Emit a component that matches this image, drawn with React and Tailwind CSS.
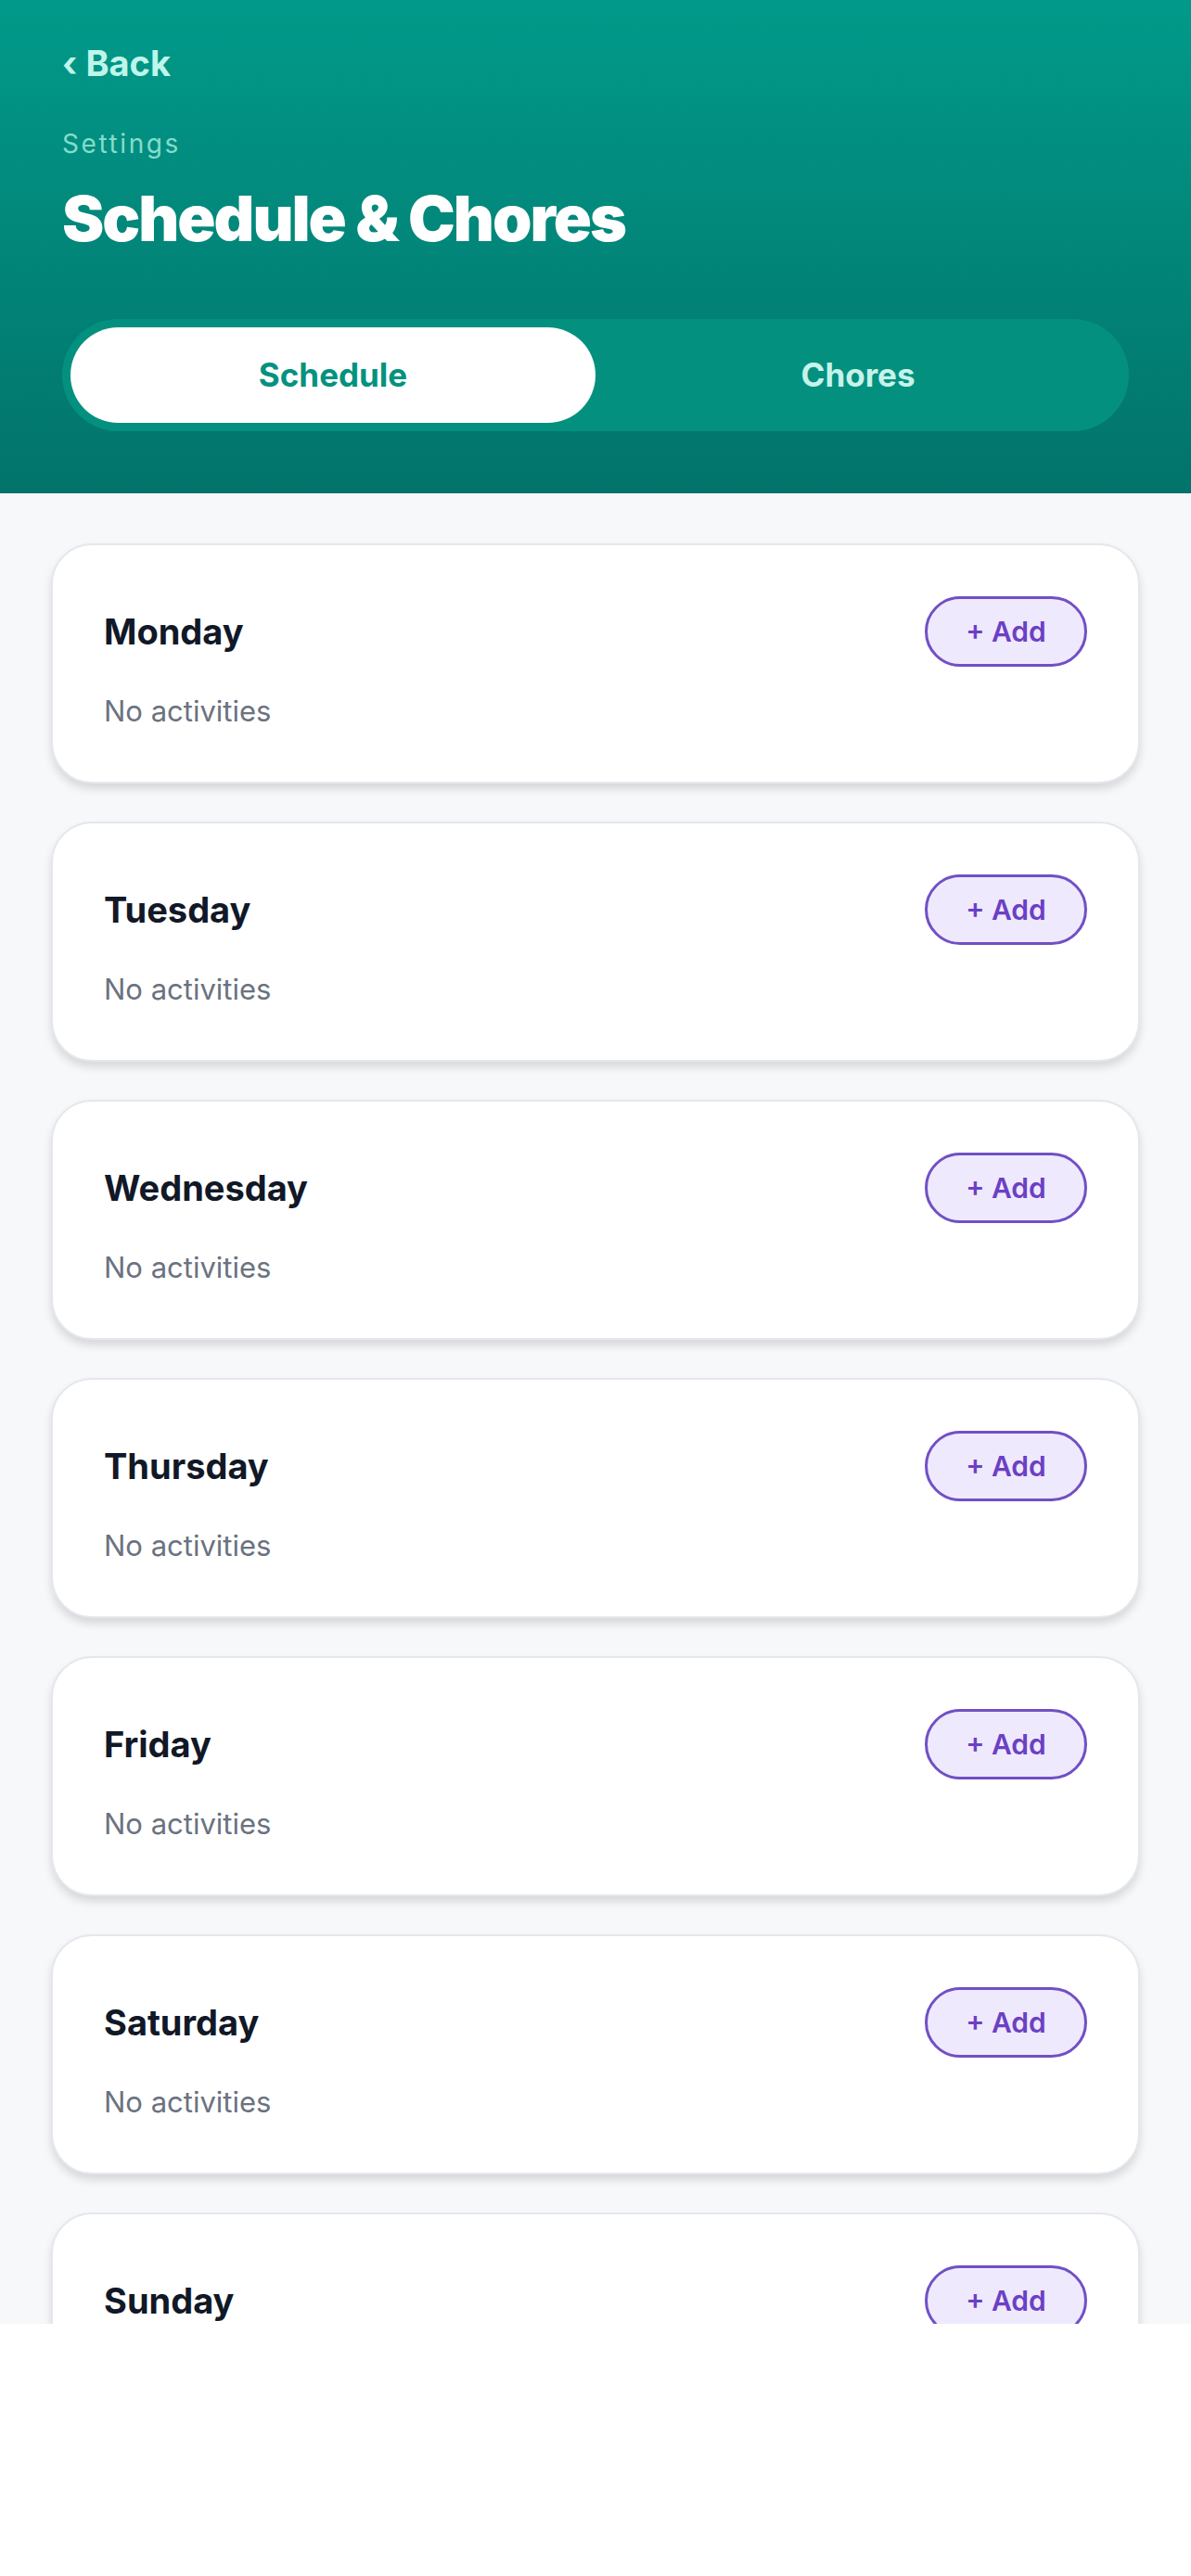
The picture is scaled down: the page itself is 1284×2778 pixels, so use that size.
import { useState } from 'react'

const DAYS = ['Monday', 'Tuesday', 'Wednesday', 'Thursday', 'Friday', 'Saturday', 'Sunday']

export default function App() {
  const [tab, setTab] = useState('schedule')

  return (
    <div className="min-h-screen bg-white" style={{ fontFamily: 'Inter, "Noto Sans", sans-serif' }}>
      <div className="h-[2506px] overflow-hidden bg-[#f7f8fa]">
        {/* Header */}
        <div className="bg-gradient-to-b from-[#019a8a] to-[#02736a] px-[67px] pt-[44px] pb-[67px]">
          <button className="text-[38px] leading-[48px] font-bold text-[#bff5ea]">‹ Back</button>
          <div className="mt-[45px] text-[28px] leading-[36px] tracking-[2.6px] text-[#86dccb]">Settings</div>
          <h1 className="mt-[23px] text-[68px] leading-[78px] font-black tracking-[-0.03em] text-white">
            Schedule &amp; Chores
          </h1>
          <div className="mt-[70px] flex h-[121px] rounded-full bg-[#04907f] p-[9px]">
            <button
              onClick={() => setTab('schedule')}
              className={`flex-1 rounded-full text-[35px] font-bold ${tab === 'schedule' ? 'bg-white text-[#03927f]' : 'text-[#c6f3ea]'}`}
            >
              Schedule
            </button>
            <button
              onClick={() => setTab('chores')}
              className={`flex-1 rounded-full text-[35px] font-bold ${tab === 'chores' ? 'bg-white text-[#03927f]' : 'text-[#c6f3ea]'}`}
            >
              Chores
            </button>
          </div>
        </div>

        {/* Days */}
        <div className="flex flex-col gap-[41px] px-[55px] pt-[54px]">
          {DAYS.map(d => (
            <div
              key={d}
              className="rounded-[44px] border-2 border-[#e4e7ec] bg-white px-[55px] pt-[55px] pb-[56px] shadow-[0_6px_10px_rgba(0,0,0,0.13)]"
            >
              <div className="flex items-center justify-between">
                <div className="text-[38px] font-bold text-[#111827]">{d}</div>
                <button className="flex h-[76px] w-[175px] items-center justify-center rounded-full border-[3px] border-[#7150c4] bg-[#efe9fe] text-[30px] font-semibold text-[#6b40c4]">
                  + Add
                </button>
              </div>
              <div className="mt-[28px] text-[31px] leading-[40px] text-[#6b7280]">No activities</div>
            </div>
          ))}
        </div>
      </div>
    </div>
  )
}
